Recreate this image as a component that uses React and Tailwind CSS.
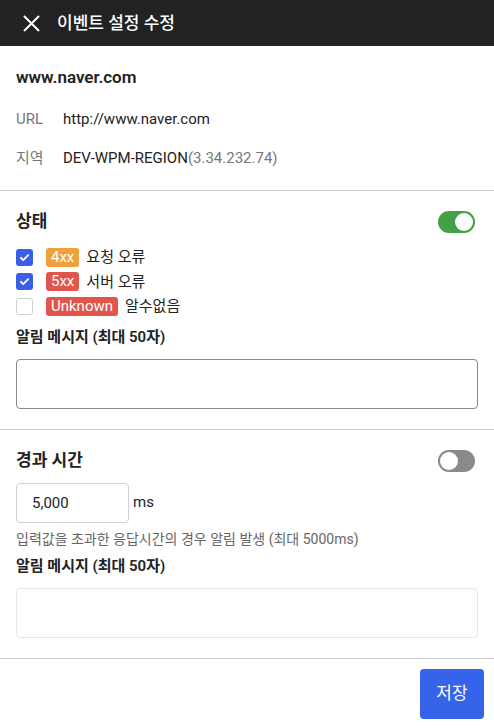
import React, { useState } from 'react'

const font = { fontFamily: "Roboto, 'Noto Sans CJK KR', 'Noto Sans', sans-serif" }

function Toggle({ on, onClick }) {
  return (
    <button
      type="button"
      onClick={onClick}
      className={`relative w-[37px] h-[22px] rounded-full flex items-center px-[2px] ${on ? 'bg-[#43a047] justify-end' : 'bg-[#8a8a8a] justify-start'}`}
    >
      <span className="w-[18px] h-[18px] rounded-full bg-white" />
    </button>
  )
}

function Check({ checked, onClick }) {
  return (
    <button
      type="button"
      onClick={onClick}
      className={`w-[17px] h-[17px] rounded-[3px] flex items-center justify-center shrink-0 ${checked ? 'bg-[#3a5ee6]' : 'bg-white border border-[#d0d0d0]'}`}
    >
      {checked && (
        <svg width="11" height="11" viewBox="0 0 12 12" fill="none">
          <path d="M2 6.3l2.6 2.5L10 3.4" stroke="white" strokeWidth="2" strokeLinecap="round" strokeLinejoin="round" />
        </svg>
      )}
    </button>
  )
}

export default function App() {
  const [statusOn, setStatusOn] = useState(true)
  const [timeOn, setTimeOn] = useState(false)
  const [checks, setChecks] = useState([true, true, false])

  const rows = [
    { badge: '4xx', color: 'bg-[#efa23a]', label: '요청 오류' },
    { badge: '5xx', color: 'bg-[#e0564d]', label: '서버 오류' },
    { badge: 'Unknown', color: 'bg-[#e0564d]', label: '알수없음' },
  ]

  return (
    <div className="w-[494px] h-[728px] bg-white text-[#222] overflow-hidden" style={font}>
      {/* header */}
      <div className="h-[46px] bg-[#222222] flex items-center pl-[23px]">
        <svg width="17" height="17" viewBox="0 0 17 17" fill="none">
          <path d="M1 1l15 15M16 1L1 16" stroke="white" strokeWidth="2" />
        </svg>
        <div className="ml-[17px] text-white text-[17px] font-medium leading-6">이벤트 설정 수정</div>
      </div>

      {/* site info */}
      <div className="px-4 pt-[19px] pb-[22px] border-b border-[#cccccc]">
        <div className="text-[17px] font-semibold leading-6">www.naver.com</div>
        <div className="flex mt-[20px] text-[15px] leading-5">
          <span className="w-[47px] text-[#777]">URL</span>
          <span>http://www.naver.com</span>
        </div>
        <div className="flex mt-[19px] text-[15px] leading-5">
          <span className="w-[47px] text-[#777]">지역</span>
          <span>DEV-WPM-REGION<span className="text-[#777]">(3.34.232.74)</span></span>
        </div>
      </div>

      {/* status */}
      <div className="px-4 pt-[19px] pb-[20px] border-b border-[#cccccc]">
        <div className="flex items-center justify-between h-6">
          <span className="text-[17px] font-bold">상태</span>
          <div className="mr-[3px]"><Toggle on={statusOn} onClick={() => setStatusOn(!statusOn)} /></div>
        </div>
        <div className="mt-[11px] flex flex-col">
          {rows.map((r, i) => (
            <div key={r.badge} className="h-[24.5px] flex items-center">
              <Check checked={checks[i]} onClick={() => setChecks(checks.map((c, j) => (j === i ? !c : c)))} />
              <span className={`ml-[13px] h-[19px] px-[5px] rounded-[3px] text-white text-[15px] leading-[19px] ${r.color}`}>{r.badge}</span>
              <span className="ml-[7px] text-[15px]">{r.label}</span>
            </div>
          ))}
        </div>
        <div className="mt-[8px] text-[15px] font-semibold leading-5">알림 메시지 (최대 50자)</div>
        <textarea className="mt-[12px] block w-full h-[50px] border border-[#8a8a8a] rounded-[4px] resize-none outline-none px-3 py-2 text-[15px]" />
      </div>

      {/* elapsed time */}
      <div className="px-4 pt-[19px] pb-[20px] border-b border-[#cccccc]">
        <div className="flex items-center justify-between h-6">
          <span className="text-[17px] font-bold">경과 시간</span>
          <div className="mr-[3px]"><Toggle on={timeOn} onClick={() => setTimeOn(!timeOn)} /></div>
        </div>
        <div className="mt-[10px] flex items-center">
          <input
            defaultValue="5,000"
            className="w-[113px] h-[40px] border border-[#d0d0d0] rounded-[4px] px-[15px] text-[15px] outline-none"
          />
          <span className="ml-[4px] text-[15px]">ms</span>
        </div>
        <div className="mt-[7px] text-[14px] leading-[18px] text-[#666]">입력값을 초과한 응답시간의 경우 알림 발생 (최대 5000ms)</div>
        <div className="mt-[8px] text-[15px] font-semibold leading-5">알림 메시지 (최대 50자)</div>
        <textarea className="mt-[12px] block w-full h-[50px] border border-[#e6e6e6] rounded-[4px] resize-none outline-none px-3 py-2 text-[15px]" />
      </div>

      {/* footer */}
      <div className="flex justify-end pt-[10px] pr-[10px]">
        <button type="button" className="w-[64px] h-[50px] rounded-[4px] bg-[#3563e9] text-white text-[17px]">저장</button>
      </div>
    </div>
  )
}
